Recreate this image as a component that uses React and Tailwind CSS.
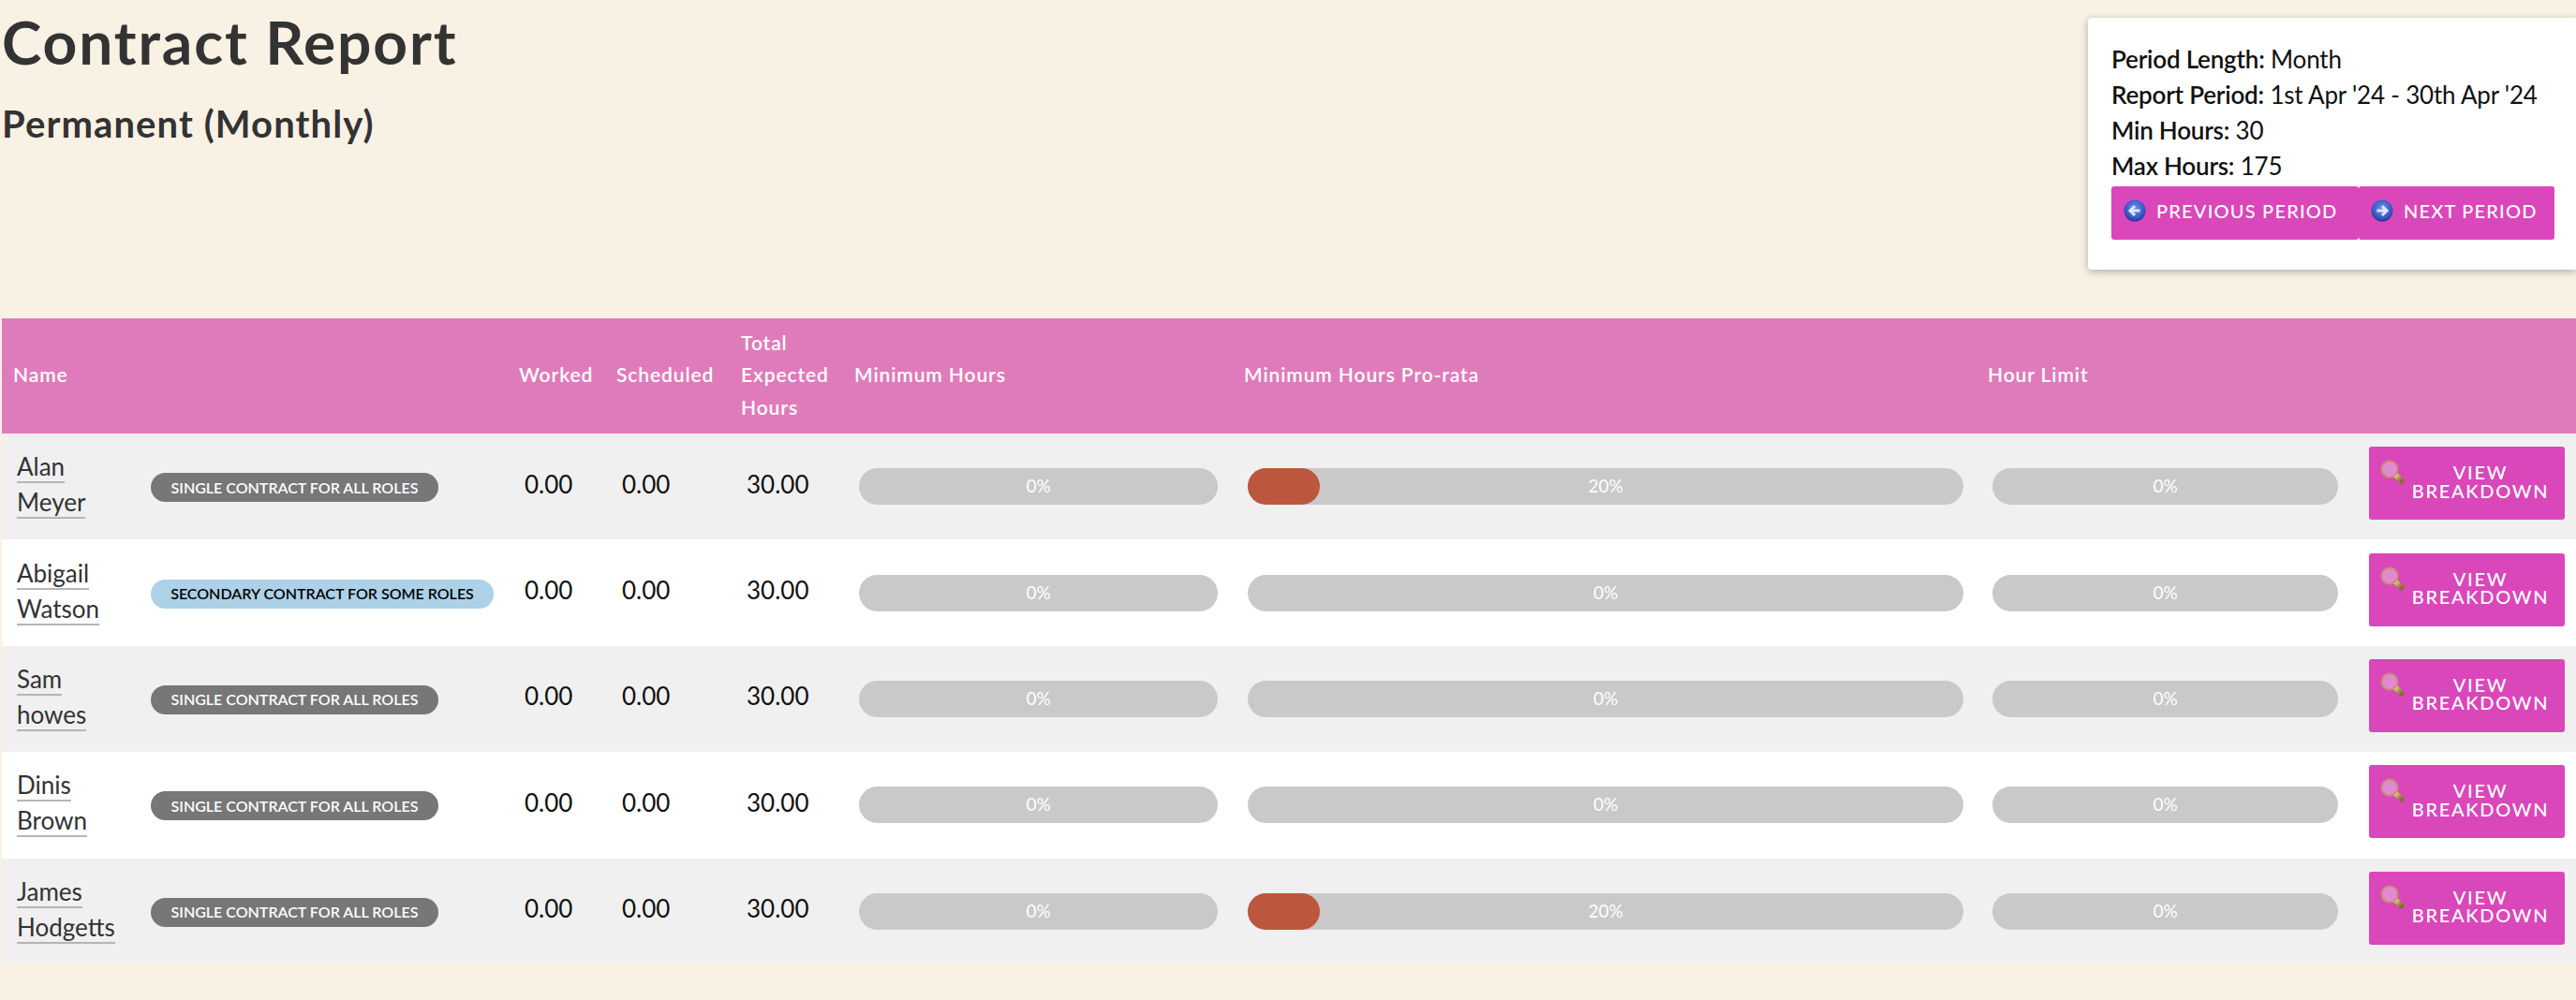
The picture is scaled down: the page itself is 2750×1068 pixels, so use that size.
import React from "react";

const ROWS = [
  { first: "Alan", last: "Meyer", contract: "single", prorata: 20 },
  { first: "Abigail", last: "Watson", contract: "secondary", prorata: 0 },
  { first: "Sam", last: "howes", contract: "single", prorata: 0 },
  { first: "Dinis", last: "Brown", contract: "single", prorata: 0 },
  { first: "James", last: "Hodgetts", contract: "single", prorata: 20 },
];

const ArrowBubble = ({ dir, id }) => (
  <svg width="24" height="24" viewBox="0 0 24 24" className="shrink-0">
    <defs>
      <radialGradient id={id} cx="50%" cy="40%" r="60%">
        <stop offset="0%" stopColor="#6f93e8" />
        <stop offset="70%" stopColor="#3a5bc8" />
        <stop offset="100%" stopColor="#2c2f96" />
      </radialGradient>
    </defs>
    <circle cx="12" cy="12" r="11.5" fill={`url(#${id})`} />
    <path
      d={dir === "left" ? "M17.5 12H7.5M12 7l-5 5 5 5" : "M6.5 12h10M12 7l5 5-5 5"}
      fill="none"
      stroke="#dfe5f5"
      strokeWidth="3"
    />
  </svg>
);

const Magnifier = ({ id }) => (
  <svg width="26" height="26" viewBox="0 0 26 26" className="shrink-0">
    <defs>
      <linearGradient id={id} x1="0" y1="0" x2="1" y2="1">
        <stop offset="0%" stopColor="#ecd98f" />
        <stop offset="100%" stopColor="#8c6a33" />
      </linearGradient>
    </defs>
    <path d="M15.5 15.5l7 7" stroke={`url(#${id})`} strokeWidth="6" strokeLinecap="round" />
    <circle cx="10" cy="10" r="8.5" fill="#e08ad3" stroke="#c98f6f" strokeWidth="2" />
  </svg>
);

const Bar = ({ value }) => (
  <div className="relative h-[39px] rounded-full bg-[#c9c9c9]">
    {value > 0 && (
      <div className="absolute inset-y-0 left-0 w-[77px] rounded-full bg-[#bc563e]" />
    )}
    <span className="absolute inset-0 flex items-center justify-center pb-[2px] text-[19px] leading-none text-white">
      {value}%
    </span>
  </div>
);

export default function App() {
  return (
    <div className="min-h-screen overflow-hidden bg-[#f9f1e4] pl-0.5 font-['Lato','Noto_Sans',sans-serif]">
      <div className="flex items-start justify-between">
        <div>
          <h1 className="mt-[7px] text-[64px] leading-[76px] font-bold tracking-[1.9px] text-[#333333]">Contract Report</h1>
          <h2 className="mt-[24px] text-[40px] leading-[50px] font-bold tracking-[1.1px] text-[#333333]">Permanent (Monthly)</h2>
        </div>
        <div className="mt-[19px] h-[269px] w-[521px] rounded-l-[4px] bg-white pt-[25px] pl-[25px] shadow-[0_2px_8px_rgba(0,0,0,0.3)]">
          <div className="text-[26px] leading-[38px] tracking-[-0.2px] text-[#111111]">
            <div><span className="font-semibold">Period Length:</span> Month</div>
            <div><span className="font-semibold">Report Period:</span> 1st Apr '24 - 30th Apr '24</div>
            <div><span className="font-semibold">Min Hours:</span> 30</div>
            <div><span className="font-semibold">Max Hours:</span> 175</div>
          </div>
          <div className="mt-[3px] flex h-[57px] text-[20px] font-medium tracking-[1.2px] text-white">
            <button className="flex w-[264px] items-center gap-[11px] rounded-[3px] bg-[#da47ba] pb-[5px] pl-[13px]">
              <ArrowBubble dir="left" id="prevBubble" />
              PREVIOUS PERIOD
            </button>
            <button className="flex w-[209px] items-center gap-[11px] rounded-[3px] bg-[#da47ba] pb-[5px] pl-[13px]">
              <ArrowBubble dir="right" id="nextBubble" />
              NEXT PERIOD
            </button>
          </div>
        </div>
      </div>

      <table className="mt-[52px] w-full table-fixed border-collapse">
        <colgroup>
          <col className="w-[148px]" />
          <col className="w-[393px]" />
          <col className="w-[103px]" />
          <col className="w-[133px]" />
          <col className="w-[121px]" />
          <col className="w-[416px]" />
          <col className="w-[794px]" />
          <col className="w-[406px]" />
          <col className="w-[234px]" />
        </colgroup>
        <thead>
          <tr className="h-[123px] bg-[#e07bbb] text-left text-[21px] leading-[34.5px] tracking-[0.9px] text-white">
            <th className="pb-[2px] pl-3 font-semibold" colSpan={2}>Name</th>
            <th className="pb-[2px] pl-[11px] font-semibold">Worked</th>
            <th className="pb-[2px] pl-3 font-semibold">Scheduled</th>
            <th className="pb-[2px] pl-3 font-semibold">Total Expected Hours</th>
            <th className="pb-[2px] pl-3 font-semibold">Minimum Hours</th>
            <th className="pb-[2px] pl-3 font-semibold">Minimum Hours Pro-rata</th>
            <th className="pb-[2px] pl-3 font-semibold">Hour Limit</th>
            <th />
          </tr>
        </thead>
        <tbody>
          {ROWS.map((r, i) => (
            <tr key={r.first} className={`h-[113.4px] ${i % 2 === 0 ? "bg-[#f0f0f0]" : "bg-white"}`}>
              <td className="pb-[5px] pl-4 text-[26px] leading-[38px] text-[#333333]">
                <a className="border-b-2 border-[#b5b5b5]">{r.first}</a>
                <br />
                <a className="border-b-2 border-[#b5b5b5]">{r.last}</a>
              </td>
              <td className="pt-[2px] pl-[11px]">
                {r.contract === "single" ? (
                  <span className="inline-flex h-[31px] w-[307px] items-center justify-center rounded-full bg-[#777777] text-[16px] font-semibold text-white">
                    SINGLE CONTRACT FOR ALL ROLES
                  </span>
                ) : (
                  <span className="inline-flex h-[31px] w-[366px] items-center justify-center rounded-full bg-[#add1e6] text-[16px] font-semibold text-black">
                    SECONDARY CONTRACT FOR SOME ROLES
                  </span>
                )}
              </td>
              <td className="pb-[5px] pl-[17px] text-[26px] text-[#111111]">0.00</td>
              <td className="pb-[5px] pl-[18px] text-[26px] text-[#111111]">0.00</td>
              <td className="pb-[5px] pl-[18px] text-[26px] text-[#111111]">30.00</td>
              <td className="pr-4 pl-[17px]"><Bar value={0} /></td>
              <td className="pr-[14px] pl-4"><Bar value={r.prorata} /></td>
              <td className="pr-5 pl-[17px]"><Bar value={0} /></td>
              <td className="pr-3 pb-[7px] pl-[13px]">
                <button className="flex h-[78px] w-[209px] items-start rounded-[3px] bg-[#da47ba] pt-[14px] pl-[12px] text-[20px] leading-[19.5px] font-medium tracking-[1.7px] text-white">
                  <Magnifier id={`lens${i}`} />
                  <span className="mt-[4px] flex-1 pr-[9px] text-center">VIEW BREAKDOWN</span>
                </button>
              </td>
            </tr>
          ))}
        </tbody>
      </table>
    </div>
  );
}
